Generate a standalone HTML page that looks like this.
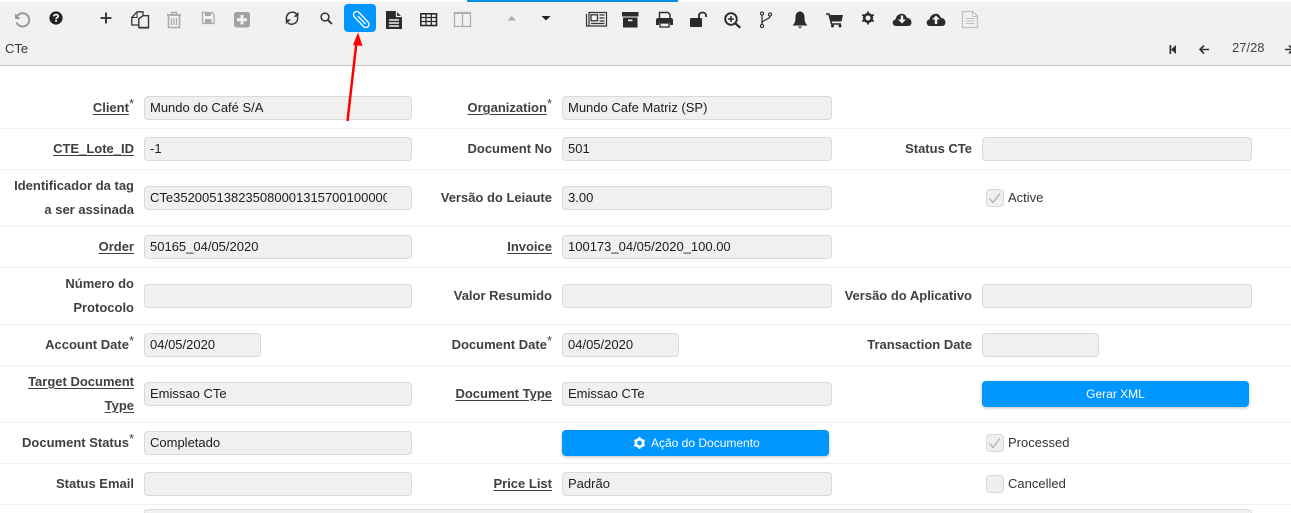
<!DOCTYPE html>
<html><head><meta charset="utf-8"><style>
html,body{margin:0;padding:0;background:#fff;width:1291px;height:513px;overflow:hidden}
body{position:relative;font-family:"Liberation Sans",Arial,sans-serif;font-size:13px;color:#222}
.a{position:absolute}
.sep{position:absolute;left:0;width:1291px;height:1px;background:#f0f0f0}
.i{position:absolute;height:22px;line-height:22px;background:#f0f0f0;border:1px solid #dadada;border-radius:4px;box-sizing:content-box;padding:0 5px;overflow:hidden;white-space:nowrap;color:#1c1c1c}
.l{position:absolute;text-align:right;font-weight:bold;color:#404040;line-height:24px;white-space:nowrap;margin-top:1px}
.l u{text-underline-offset:2px}
.l sup{font-weight:normal;font-size:13px;line-height:0;position:relative;top:0;vertical-align:4px;margin-left:0}
.b{position:absolute;height:26px;line-height:26px;background:#0096ff;color:#fff;border-radius:4px;text-align:center;font-size:12px;box-shadow:0 1px 3px rgba(0,0,0,.25)}
.c{position:absolute;left:986px;width:16px;height:16px;background:#efefef;border:1px solid #d8d8d8;border-radius:4px}
.t{position:absolute;left:1008px;line-height:18px;color:#333;white-space:nowrap;font-size:13px}
svg{position:absolute;left:0;top:0}
</style></head><body>
<div class="a" style="left:0;top:2px;width:1291px;height:63px;background:#f1f1f1"></div>
<div class="a" style="left:0;top:65px;width:1291px;height:1px;background:#c4c4c4"></div>
<div class="a" style="left:467px;top:0;width:211px;height:2px;background:#0a8fe8"></div>
<div class="a" style="left:5px;top:41px;line-height:16px;color:#333">CTe</div>
<div class="a" style="left:1232px;top:40px;line-height:16px;color:#444;font-size:13px">27/28</div>
<div class="a" style="left:344px;top:4px;width:32px;height:28px;background:#0096ff;border-radius:4px"></div>

<svg width="1291" height="513" viewBox="0 0 1291 513" fill="none">
<!-- undo -->
<path d="M16.6 22.5A6.6 6.6 0 1 0 18 15.2L15.5 17.2" stroke="#999" stroke-width="2"/><path d="M15 13.5V19H20.5Z" fill="#999"/>
<!-- help -->
<circle cx="56" cy="18" r="6.6" fill="#222"/><path d="M53.8 16.4C53.9 14 58.2 14 58.2 16.2C58.2 17.6 56 17.6 56 19.2" stroke="#fff" stroke-width="1.6"/><rect x="55.1" y="20" width="1.8" height="1.7" fill="#fff"/>
<!-- plus -->
<path d="M100.5 18H111.5M106 12.5V23.5" stroke="#2b2b2b" stroke-width="1.8"/>
<!-- copy -->
<path d="M137 11.800H143V16M137 11.800L131.800 17.500V25H138.500" stroke="#333" stroke-width="1.300"/><path d="M137 12V17.500H132" stroke="#333" stroke-width="1"/><path d="M138.800 18.500L143.300 15.700H148.500V27.500H138.800Z" stroke="#2a3a4a" stroke-width="1.400" fill="#f1f1f1"/><path d="M139 28.500H149" stroke="#888" stroke-width="1"/>
<!-- trash -->
<path d="M167 15H181" stroke="#aaa" stroke-width="1.800"/><path d="M171.500 14.500V12.500H176.500V14.500" stroke="#aaa" stroke-width="1.500"/><path d="M168.500 15.500V27.500H179.500V15.500" stroke="#aaa" stroke-width="1.600"/><path d="M171.500 18V25M174 18V25M176.500 18V25" stroke="#aaa" stroke-width="1.200"/>
<!-- save -->
<path d="M202.500 12.500H212L214 14.500V23.500H202.500Z" stroke="#aaa" stroke-width="1.300"/><rect x="205" y="12.500" width="6" height="3.500" fill="#aaa"/><rect x="205" y="19" width="6.500" height="4" fill="#aaa"/>
<!-- plus-square -->
<rect x="234" y="12" width="16" height="15.500" rx="2.500" fill="#a2a2a2"/><path d="M237 19.700H247M242 15V24.500" stroke="#f1f1f1" stroke-width="3"/>
<!-- refresh -->
<path d="M286.500 19.500A6 6 0 0 1 296.500 13.800M297.500 17A6 6 0 0 1 288 23" stroke="#333" stroke-width="1.500"/><path d="M298.500 12V16.800H293.500ZM285.800 24.200V19.500H291Z" fill="#333"/>
<!-- search -->
<circle cx="325" cy="17" r="3.900" stroke="#333" stroke-width="1.500"/><path d="M328 20L331.800 24" stroke="#333" stroke-width="1.900"/>
<!-- paperclip -->
<path d="M368.300 22.300L358.800 12.300A3.200 3.200 0 0 0 354.200 16.700L363.700 26.700A3.200 3.200 0 0 0 368.300 22.300" stroke="#fff" stroke-width="1.400"/><path d="M358 16.200L365.500 24" stroke="#fff" stroke-width="1.300"/>
<!-- file -->
<path d="M386 11H396L402 17V29H386Z" fill="#2b2b2b"/><path d="M396.500 10.500V16.500H402.500" stroke="#f1f1f1" stroke-width="1.200"/><path d="M389 20H399M389 23H399M389 26H399" stroke="#f1f1f1" stroke-width="1.500"/>
<!-- table -->
<rect x="420.800" y="13.800" width="15.700" height="11.700" stroke="#2b2b2b" stroke-width="1.600"/><path d="M421 17.500H436.500M421 21.500H436.500M426 14V25.500M431.300 14V25.500" stroke="#2b2b2b" stroke-width="1.300"/>
<!-- columns -->
<rect x="454.500" y="12.500" width="16" height="14" stroke="#aeaeae" stroke-width="1.300"/><path d="M454.500 13H470.500" stroke="#aeaeae" stroke-width="2"/><path d="M462.500 13V26.500" stroke="#aeaeae" stroke-width="1.300"/>
<!-- arrows -->
<path d="M507.500 20.500L511.700 16L516 20.500Z" fill="#aaa"/><path d="M541.500 16H550.500L546 20.500Z" fill="#222"/>
<!-- newspaper -->
<path d="M586.500 14V26H606.500V12.500H589V26" stroke="#333" stroke-width="1.200"/><rect x="591" y="14.800" width="6.500" height="6" stroke="#333" stroke-width="1.300"/><path d="M599.500 15H604.500M599.500 18H604.500M599.500 21H604.500M591 23.500H604.500" stroke="#333" stroke-width="1.300"/>
<!-- archive -->
<rect x="622" y="12" width="16.500" height="4.500" fill="#2b2b2b"/><rect x="623" y="17.500" width="14.500" height="10" fill="#2b2b2b"/><rect x="628" y="19.500" width="4.500" height="1.700" fill="#f1f1f1"/>
<!-- print -->
<path d="M659.500 18V12.500H668L670 14.500V18" stroke="#2b2b2b" stroke-width="1.400"/><path d="M656 20.500Q656 18 658 18H671Q673 18 673 20.500V25H670V22.500H659V25H656Z" fill="#2b2b2b"/><path d="M660 23H669V27H660Z" stroke="#2b2b2b" stroke-width="1.300"/>
<!-- unlock -->
<rect x="690" y="18" width="12" height="9" rx="1" fill="#2b2b2b"/><path d="M699 18V15.500C699 11.500 706 11.500 706 15.500V17" stroke="#2b2b2b" stroke-width="1.800"/>
<!-- zoom plus -->
<circle cx="731" cy="19" r="5.800" stroke="#2b2b2b" stroke-width="1.900"/><path d="M728 19H734M731 16V22" stroke="#2b2b2b" stroke-width="1.500"/><path d="M735.300 23.300L740.300 27.800" stroke="#2b2b2b" stroke-width="2.300"/>
<!-- branch -->
<circle cx="762" cy="13.500" r="1.600" stroke="#2b2b2b" stroke-width="1.100"/><circle cx="770" cy="14.500" r="1.600" stroke="#2b2b2b" stroke-width="1.100"/><circle cx="762" cy="26" r="1.600" stroke="#2b2b2b" stroke-width="1.100"/><path d="M762 15V24.500M770 16C770 19.500 763 19.500 762 23" stroke="#2b2b2b" stroke-width="1.200"/>
<!-- bell -->
<path d="M800 11.500C797.500 11.500 795.500 13.800 795.500 17C795.500 22 794.500 23.500 792.500 25.500H807.500C805.500 23.500 804.500 22 804.500 17C804.500 13.800 802.500 11.500 800 11.500Z" fill="#2b2b2b"/><path d="M798 26.500H802L800 28.500Z" fill="#2b2b2b"/>
<!-- cart -->
<path d="M826 14H829L831.500 24H841" stroke="#2b2b2b" stroke-width="1.600"/><path d="M830 15H843L841.500 21.500H831.500Z" fill="#2b2b2b"/><circle cx="832.500" cy="26" r="1.500" fill="#2b2b2b"/><circle cx="840" cy="26" r="1.500" fill="#2b2b2b"/>
<!-- gear -->
<circle cx="868" cy="18" r="3.800" stroke="#2b2b2b" stroke-width="2.600"/><path d="M868 11.500V24.500M862.300 14.700L873.700 21.300M862.300 21.300L873.700 14.700" stroke="#2b2b2b" stroke-width="1.800" stroke-dasharray="2 9.300"/>
<!-- cloud down -->
<path d="M896 26C892 26 891.500 20 895.500 19.500C896 14 904.500 10.500 907 18C912 17.500 913.500 26 908 26Z" fill="#2b2b2b"/><path d="M902 15.500V20" stroke="#f1f1f1" stroke-width="2.400"/><path d="M898 19.500H906L902 23.500Z" fill="#f1f1f1"/>
<!-- cloud up -->
<path d="M930 26C926 26 925.500 20 929.500 19.500C930 14 938.500 10.500 941 18C946 17.500 947.500 26 942 26Z" fill="#2b2b2b"/><path d="M936 19V24" stroke="#f1f1f1" stroke-width="2.400"/><path d="M932 19.500H940L936 15.500Z" fill="#f1f1f1"/>
<!-- doc -->
<path d="M962.500 11.500H973L977.500 16V27.500H962.500Z" stroke="#c2c2c2" stroke-width="1.300"/><path d="M972.500 12V16.500H977" stroke="#c2c2c2" stroke-width="1"/><path d="M965.500 18.500H974.500M965.500 21H974.500M965.500 23.500H974.500" stroke="#c2c2c2" stroke-width="1"/>
<!-- nav -->
<rect x="1169.500" y="45" width="1.700" height="9" fill="#333"/><path d="M1176 45V54L1171 49.500Z" fill="#333"/>
<path d="M1200 49.500H1209M1204 45.500L1200 49.500L1204 53.500" stroke="#333" stroke-width="1.600"/>
<path d="M1285 49.500H1294M1289 45.500L1293 49.500L1289 53.500" stroke="#333" stroke-width="1.600"/>
</svg>

<div class="sep" style="top:128px"></div><div class="sep" style="top:169px"></div><div class="sep" style="top:226px"></div><div class="sep" style="top:267px"></div><div class="sep" style="top:324px"></div><div class="sep" style="top:365px"></div><div class="sep" style="top:422px"></div><div class="sep" style="top:463px"></div><div class="sep" style="top:504px"></div>

<div class="l" style="right:1157px;top:95px"><u>Client</u><sup>*</sup></div>
<div class="i" style="left:144px;top:96px;width:256px">Mundo do Café S/A</div>
<div class="l" style="right:739px;top:95px"><u>Organization</u><sup>*</sup></div>
<div class="i" style="left:562px;top:96px;width:258px">Mundo Cafe Matriz (SP)</div>

<div class="l" style="right:1157px;top:136px"><u>CTE_Lote_ID</u></div>
<div class="i" style="left:144px;top:137px;width:256px">-1</div>
<div class="l" style="right:739px;top:136px">Document No</div>
<div class="i" style="left:562px;top:137px;width:258px">501</div>
<div class="l" style="right:319px;top:136px">Status CTe</div>
<div class="i" style="left:982px;top:137px;width:258px"></div>

<div class="l" style="right:1157px;top:173px">Identificador da tag<br>a ser assinada</div>
<div class="i" style="left:144px;top:186px;width:237px;padding-right:24px"><div style="width:237px;overflow:hidden">CTe35200513823508000131570010000050110000</div></div>
<div class="l" style="right:739px;top:185px">Versão do Leiaute</div>
<div class="i" style="left:562px;top:186px;width:258px">3.00</div>
<div class="c" style="top:189px"></div>
<div class="t" style="top:189px">Active</div>

<div class="l" style="right:1157px;top:234px"><u>Order</u></div>
<div class="i" style="left:144px;top:235px;width:256px">50165_04/05/2020</div>
<div class="l" style="right:739px;top:234px"><u>Invoice</u></div>
<div class="i" style="left:562px;top:235px;width:258px">100173_04/05/2020_100.00</div>

<div class="l" style="right:1157px;top:271px">Número do<br>Protocolo</div>
<div class="i" style="left:144px;top:284px;width:256px"></div>
<div class="l" style="right:739px;top:283px">Valor Resumido</div>
<div class="i" style="left:562px;top:284px;width:258px"></div>
<div class="l" style="right:319px;top:283px">Versão do Aplicativo</div>
<div class="i" style="left:982px;top:284px;width:258px"></div>

<div class="l" style="right:1157px;top:332px">Account Date<sup>*</sup></div>
<div class="i" style="left:144px;top:333px;width:105px">04/05/2020</div>
<div class="l" style="right:739px;top:332px">Document Date<sup>*</sup></div>
<div class="i" style="left:562px;top:333px;width:105px">04/05/2020</div>
<div class="l" style="right:319px;top:332px">Transaction Date</div>
<div class="i" style="left:982px;top:333px;width:105px"></div>

<div class="l" style="right:1157px;top:369px"><u>Target Document</u><br><u>Type</u></div>
<div class="i" style="left:144px;top:382px;width:256px">Emissao CTe</div>
<div class="l" style="right:739px;top:381px"><u>Document Type</u></div>
<div class="i" style="left:562px;top:382px;width:258px">Emissao CTe</div>
<div class="b" style="left:982px;top:381px;width:267px">Gerar XML</div>

<div class="l" style="right:1157px;top:430px">Document Status<sup>*</sup></div>
<div class="i" style="left:144px;top:431px;width:256px">Completado</div>
<div class="b" style="left:562px;top:430px;width:267px"></div>
<div class="a" style="left:651px;top:430px;line-height:26px;color:#fff;font-size:12px">Ação do Documento</div>
<div class="c" style="top:434px"></div>
<div class="t" style="top:434px">Processed</div>

<div class="l" style="right:1157px;top:471px">Status Email</div>
<div class="i" style="left:144px;top:472px;width:256px"></div>
<div class="l" style="right:739px;top:471px"><u>Price List</u></div>
<div class="i" style="left:562px;top:472px;width:258px">Padrão</div>
<div class="c" style="top:475px"></div>
<div class="t" style="top:475px">Cancelled</div>

<div class="i" style="left:144px;top:509px;width:1096px;height:3px;border-bottom:none;border-radius:4px 4px 0 0"></div>

<svg width="1291" height="513" viewBox="0 0 1291 513" fill="none">
<!-- checks and button gear -->
<path d="M989.500 198.500L993 202.500L1000 193.500" stroke="#b0b0b0" stroke-width="1.300"/>
<path d="M989.500 443.500L993 447.500L1000 438.500" stroke="#b0b0b0" stroke-width="1.300"/>
<circle cx="639.500" cy="443" r="3.700" stroke="#fff" stroke-width="2.600"/><path d="M639.500 437V449M634.300 440L644.700 446M634.300 446L644.700 440" stroke="#fff" stroke-width="1.800" stroke-dasharray="2 8"/>
<!-- red arrow -->
<path d="M347.500 121L356.500 42" stroke="#f00" stroke-width="2.500"/><path d="M358 32.500L362.500 46L353 45Z" fill="#f00"/>
</svg>
</body></html>
